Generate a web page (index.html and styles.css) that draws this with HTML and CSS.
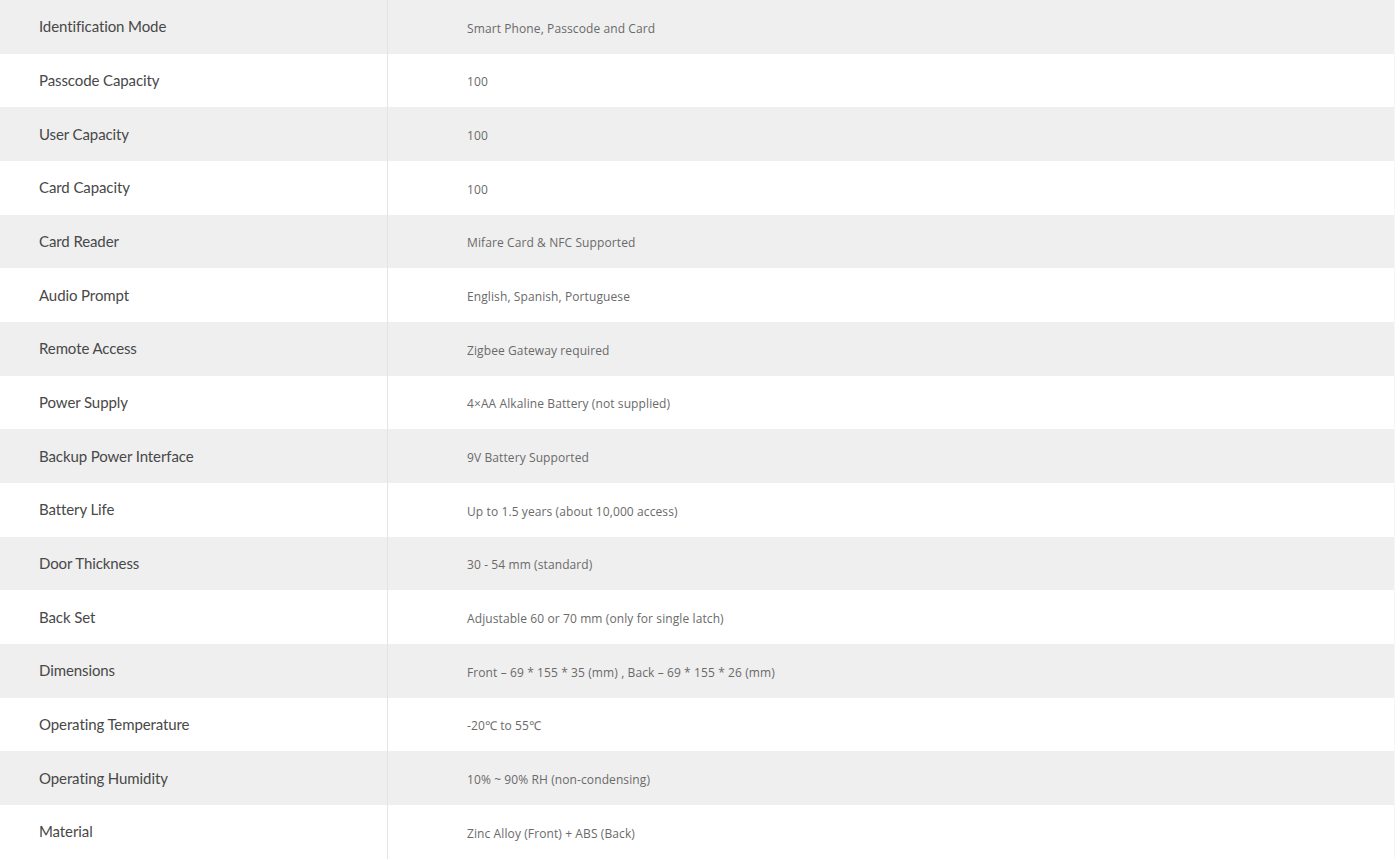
FILE: index.html
```html
<!DOCTYPE html>
<html lang="en">
<head>
<meta charset="utf-8">
<title>Specifications</title>
<link rel="stylesheet" href="styles.css">
</head>
<body>
<div class="specs">
  <div class="row"><div class="label">Identification Mode</div><div class="value">Smart Phone, Passcode and Card</div></div>
  <div class="row"><div class="label">Passcode Capacity</div><div class="value">100</div></div>
  <div class="row"><div class="label">User Capacity</div><div class="value">100</div></div>
  <div class="row"><div class="label">Card Capacity</div><div class="value">100</div></div>
  <div class="row"><div class="label">Card Reader</div><div class="value">Mifare Card &amp; NFC Supported</div></div>
  <div class="row"><div class="label">Audio Prompt</div><div class="value">English, Spanish, Portuguese</div></div>
  <div class="row"><div class="label">Remote Access</div><div class="value">Zigbee Gateway required</div></div>
  <div class="row"><div class="label">Power Supply</div><div class="value">4×AA Alkaline Battery (not supplied)</div></div>
  <div class="row"><div class="label">Backup Power Interface</div><div class="value">9V Battery Supported</div></div>
  <div class="row"><div class="label">Battery Life</div><div class="value">Up to 1.5 years (about 10,000 access)</div></div>
  <div class="row"><div class="label">Door Thickness</div><div class="value">30 - 54 mm (standard)</div></div>
  <div class="row"><div class="label">Back Set</div><div class="value">Adjustable 60 or 70 mm (only for single latch)</div></div>
  <div class="row"><div class="label">Dimensions</div><div class="value">Front – 69 * 155 * 35 (mm) , Back – 69 * 155 * 26 (mm)</div></div>
  <div class="row"><div class="label">Operating Temperature</div><div class="value">-20℃ to 55℃</div></div>
  <div class="row"><div class="label">Operating Humidity</div><div class="value">10% ~ 90% RH (non-condensing)</div></div>
  <div class="row"><div class="label">Material</div><div class="value">Zinc Alloy (Front) + ABS (Back)</div></div>
</div>
</body>
</html>
```
FILE: styles.css
```css
html, body {
  margin: 0;
  padding: 0;
  background: #ffffff;
}

.specs {
  display: flex;
  flex-direction: column;
  width: 1394px;
  border-right: 1px solid #f6f6f6;
}

.row {
  display: flex;
  height: 53.67px;
  background: #ffffff;
}

.row:nth-child(odd) {
  background: #efefef;
}

.label {
  box-sizing: border-box;
  width: 388px;
  flex: none;
  padding-left: 39px;
  border-right: 1px solid #e4e4e4;
  display: flex;
  align-items: center;
  padding-bottom: 1px;
  font-family: Lato, "Open Sans", sans-serif;
  font-size: 15px;
  letter-spacing: -0.1px;
  color: #484848;
}

.value {
  flex: 1;
  padding-left: 79px;
  display: flex;
  align-items: center;
  padding-top: 3px;
  font-family: "Open Sans", "Noto Sans", sans-serif;
  font-size: 12px;
  letter-spacing: 0.1px;
  color: #6a6a6a;
}
```
